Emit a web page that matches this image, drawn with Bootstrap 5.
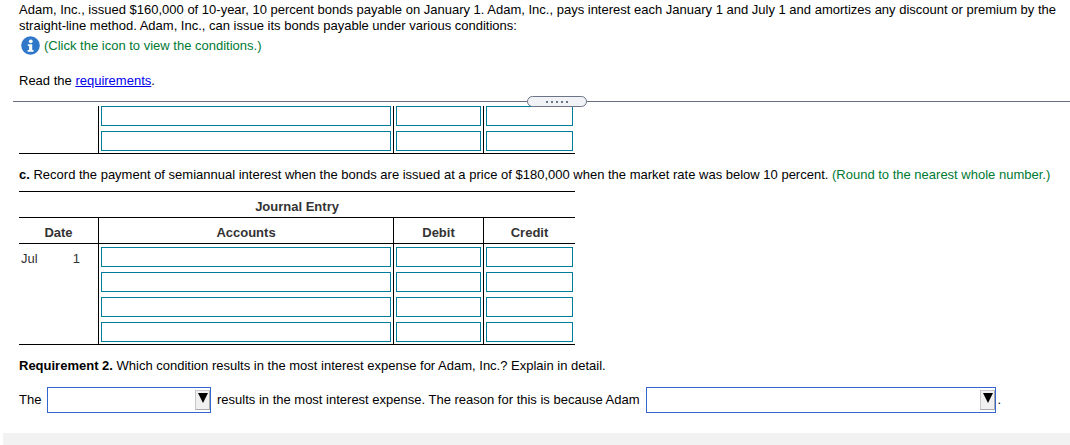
<!DOCTYPE html>
<html lang="en">
<head>
  <meta charset="UTF-8" />
  <title>Bonds payable</title>
  <link href="https://cdn.jsdelivr.net/npm/bootstrap@5.3.3/dist/css/bootstrap.min.css" rel="stylesheet"/>
  <script src="https://cdn.jsdelivr.net/npm/bootstrap@5.3.3/dist/js/bootstrap.bundle.min.js"></script>
  <style>
    html, body { height: 445px; overflow: hidden; }
    body { font-family: "Liberation Sans", Arial, sans-serif; font-size: 13px; line-height: 16px; color: #000; background: #fff; }
    .stem { padding: 2px 0 0 19px; height: 92px; margin: 0; }
    .stem-text { margin: 0; width: 1045px; }
    .hint-line { height: 23px; color: #007a33; }
    .hint-line svg { margin: 0 4px 0 2px; }
    .read-line { margin: 16px 0 0; }
    .read-line a { color: #0000ee; }
    .rule-wrap { position: relative; height: 1px; margin: 9px 0 0 13px; background: #66707f; }
    .more-pill { position: absolute; left: 514px; top: -5px; width: 60px; height: 11px; border: 1px solid #6b7585; border-radius: 6px; background: #f2f3f7; display: flex; align-items: center; justify-content: center; gap: 3px; }
    .more-pill i { width: 2px; height: 2px; background: #6b7585; display: block; }
    .je-table { border-collapse: separate; border-spacing: 0; table-layout: fixed; width: 556px; margin-left: 19px; border-bottom: 1px solid #000; }
    .je-table td, .je-table th { padding: 0; }
    .je-date { width: 79px; }
    .je-acct { width: 295px; }
    .je-debit { width: 90px; }
    .je-credit { width: 92px; }
    .je-table .cell-in { border-left: 1px solid #000; height: 25px; padding: 0 2px; vertical-align: top; }
    .je-table .cell-first { height: 28px; padding-top: 3px; }
    .je-table .cell-last { height: 22px; }
    .box-in { display: block; width: 100%; height: 20px; border: 1px solid #007c9c; background: #fff; padding: 0; border-radius: 0; outline: 0; }
    .top-table { margin-top: 4px; }
    .task-line { margin: 13px 0 0 19px; height: 16px; white-space: nowrap; }
    .task-note { color: #007a33; }
    .main-table { margin-top: 8px; color: #333; }
    .main-table .title-row th { border-top: 1px solid #000; border-bottom: 1px solid #000; height: 27px; padding-top: 5px; text-align: center; font-weight: 700; }
    .main-table .head-row th { border-bottom: 1px solid #000; height: 26px; padding-top: 5px; text-align: center; font-weight: 700; }
    .main-table .head-row th + th { border-left: 1px solid #000; }
    .date-cell { vertical-align: top; }
    .date-in { display: flex; justify-content: space-between; padding: 7px 18px 0 2px; }
    .req-line { margin: 13px 0 0 19px; height: 16px; }
    .pick-line { margin: 13px 0 0 19px; height: 26px; white-space: nowrap; }
    .pick-label { width: 28px; }
    .pick-box { position: relative; height: 26px; border: 1px solid #3366cc; background: #fff; display: block; }
    .pick-a { width: 164px; margin-right: 6px; }
    .pick-b { width: 350px; margin: 0 1px 0 7px; }
    .pick-arrow { position: absolute; right: 0; top: 2px; width: 15px; height: 20px; background: #f0f0f0; border: 1px solid #c8c8c8; border-bottom-color: #aaa; border-right-color: #aaa; display: flex; justify-content: center; padding-top: 2px; }
    .pick-arrow::before { content: ""; width: 0; height: 0; border-left: 5px solid transparent; border-right: 5px solid transparent; border-top: 10px solid #000; }
    .foot-band { height: 12px; margin: 20px 0 0 3px; background: #f2f2f2; }
  </style>
</head>
<body>
  <div class="stem">
    <p class="stem-text">Adam, Inc., issued $160,000 of 10-year, 10 percent bonds payable on January 1. Adam, Inc., pays interest each January 1 and July 1 and amortizes any discount or premium by the straight-line method. Adam, Inc., can issue its bonds payable under various conditions:</p>
    <div class="hint-line d-flex align-items-center">
      <svg width="19" height="19" viewBox="0 0 20 20">
        <circle cx="10" cy="10" r="9.8" fill="#2f78c9"/>
        <circle cx="10.3" cy="5.6" r="2" fill="#fff"/>
        <path d="M7.2 8.6h4.6v6.2h1.4v1.9H7v-1.9h1.5v-4.3H7.2z" fill="#fff"/>
      </svg>
      <span>(Click the icon to view the conditions.)</span>
    </div>
    <p class="read-line">Read the <a href="#">requirements</a>.</p>
  </div>
  <div class="rule-wrap">
    <div class="more-pill"><i></i><i></i><i></i><i></i><i></i></div>
  </div>

  <table class="je-table top-table">
    <colgroup><col class="je-date"><col class="je-acct"><col class="je-debit"><col class="je-credit"></colgroup>
    <tr><td></td><td class="cell-in"><input class="box-in"></td><td class="cell-in"><input class="box-in"></td><td class="cell-in"><input class="box-in"></td></tr>
    <tr><td></td><td class="cell-in cell-last"><input class="box-in"></td><td class="cell-in cell-last"><input class="box-in"></td><td class="cell-in cell-last"><input class="box-in"></td></tr>
  </table>

  <div class="task-line"><strong>c.</strong> Record the payment of semiannual interest when the bonds are issued at a price of $180,000 when the market rate was below 10 percent. <span class="task-note">(Round to the nearest whole number.)</span></div>

  <table class="je-table main-table">
    <colgroup><col class="je-date"><col class="je-acct"><col class="je-debit"><col class="je-credit"></colgroup>
    <tr class="title-row"><th colspan="4">Journal Entry</th></tr>
    <tr class="head-row"><th>Date</th><th>Accounts</th><th>Debit</th><th>Credit</th></tr>
    <tr><td class="date-cell" rowspan="4"><div class="date-in"><span>Jul</span><span>1</span></div></td><td class="cell-in cell-first"><input class="box-in"></td><td class="cell-in cell-first"><input class="box-in"></td><td class="cell-in cell-first"><input class="box-in"></td></tr>
    <tr><td class="cell-in"><input class="box-in"></td><td class="cell-in"><input class="box-in"></td><td class="cell-in"><input class="box-in"></td></tr>
    <tr><td class="cell-in"><input class="box-in"></td><td class="cell-in"><input class="box-in"></td><td class="cell-in"><input class="box-in"></td></tr>
    <tr><td class="cell-in cell-last"><input class="box-in"></td><td class="cell-in cell-last"><input class="box-in"></td><td class="cell-in cell-last"><input class="box-in"></td></tr>
  </table>

  <div class="req-line"><strong>Requirement 2.</strong> Which condition results in the most interest expense for Adam, Inc.? Explain in detail.</div>

  <div class="pick-line d-flex align-items-center">
    <span class="pick-label">The</span>
    <span class="pick-box pick-a"><span class="pick-arrow"></span></span>
    <span>results in the most interest expense. The reason for this is because Adam</span>
    <span class="pick-box pick-b"><span class="pick-arrow"></span></span>
    <span>.</span>
  </div>

  <div class="foot-band"></div>
</body>
</html>
